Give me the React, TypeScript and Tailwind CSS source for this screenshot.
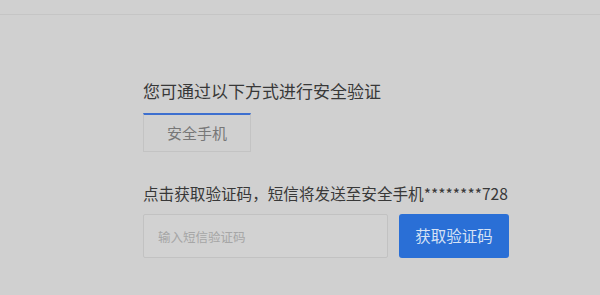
export default function App() {
  return (
    <main
      className="h-[295px] w-[600px] overflow-hidden bg-[#d0d0d0]"
      style={{ fontFamily: '"Noto Sans CJK SC", "Liberation Sans", sans-serif' }}
    >
      <div className="h-[15px] border-b border-[#c5c5c5]" />
      <div className="ml-[143px]">
        <p className="mt-[64px] text-[17px] leading-[24px] text-[#383838]">您可通过以下方式进行安全验证</p>
        <div className="mt-[10px] flex h-[39px] w-[108px] items-center justify-center border border-t-2 border-[#c3c3c3] border-t-[#3d6fcf] text-[15px] text-[#777]">
          安全手机
        </div>
        <p className="mt-[30px] text-[15.6px] leading-[22px] text-[#383838]">
          点击获取验证码，短信将发送至安全手机********728
        </p>
        <div className="mt-[10px] flex gap-[11px]">
          <input
            className="h-[44px] w-[245px] rounded-[2px] border border-[#c2c2c2] bg-[#d2d2d2] px-[14px] text-[12.5px] text-[#333] outline-none placeholder:text-[#a6a6a6]"
            placeholder="输入短信验证码"
          />
          <button className="h-[44px] w-[110px] rounded-[3px] bg-[#2a6fd6] text-[15.5px] text-[#d6e2f5]">
            获取验证码
          </button>
        </div>
      </div>
    </main>
  )
}
